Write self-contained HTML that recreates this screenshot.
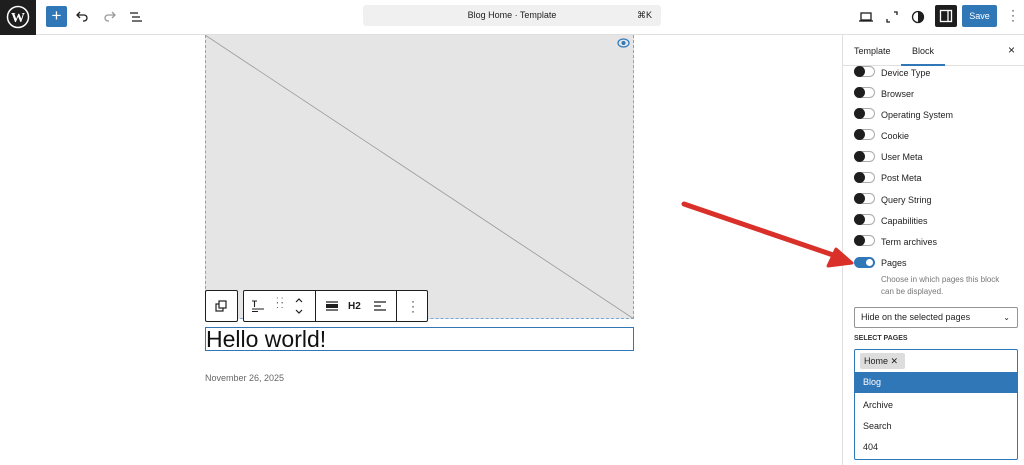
<!DOCTYPE html>
<html><head><style>
*{margin:0;padding:0;box-sizing:border-box}
body{width:1024px;height:465px;overflow:hidden;background:#fff;font-family:"Liberation Sans",sans-serif;color:#1e1e1e;position:relative;font-size:9px}
.abs{position:absolute}
.tog{position:absolute;left:854px;width:21px;height:11px;border:1px solid #aaa;border-radius:6px;background:#fff}
.tog::after{content:"";position:absolute;left:-1px;top:-1px;width:11px;height:11px;border-radius:50%;background:#1e1e1e}
.tl{position:absolute;left:881px;font-size:9px;margin-top:1px}
</style></head><body>
<div class="abs" style="left:0;top:0;width:1024px;height:35px;border-bottom:1px solid #e0e0e0;background:#fff"></div>
<div class="abs" style="left:0;top:0;width:36px;height:35px;background:#1e1e1e"></div>
<svg class="abs" style="left:6px;top:5px" width="24" height="24" viewBox="0 0 24 24"><circle cx="12" cy="12" r="10.5" fill="none" stroke="#fff" stroke-width="1.5"/><text x="12" y="17" text-anchor="middle" fill="#fff" font-size="14" font-family="Liberation Serif" font-weight="bold">W</text></svg>
<div class="abs" style="left:46px;top:6px;width:21px;height:21px;background:#3077b8;border-radius:2px;color:#fff;font-size:17px;text-align:center;line-height:20px">+</div>
<svg class="abs" style="left:75px;top:9px" width="16" height="16" viewBox="0 0 16 16"><path d="M5 3L2 6l3 3M2 6h7a3 3 0 010 6H8" fill="none" stroke="#1e1e1e" stroke-width="1.3"/></svg>
<svg class="abs" style="left:101px;top:9px" width="16" height="16" viewBox="0 0 16 16"><path d="M11 3l3 3-3 3M14 6H7a3 3 0 000 6h1" fill="none" stroke="#999" stroke-width="1.3"/></svg>
<svg class="abs" style="left:128px;top:9px" width="16" height="16" viewBox="0 0 16 16"><path d="M2 4h8M4 8h8M4 12h10" stroke="#1e1e1e" stroke-width="1.3"/></svg>
<div class="abs" style="left:363px;top:5px;width:298px;height:21px;background:#f0f0f0;border-radius:3px;font-size:9px;line-height:21px;text-align:center">Blog Home · Template<span style="position:absolute;right:9px">⌘K</span></div>
<svg class="abs" style="left:858px;top:9px" width="16" height="16" viewBox="0 0 16 16"><rect x="3" y="4" width="10" height="7" fill="none" stroke="#1e1e1e" stroke-width="1.3"/><path d="M1 12h14" stroke="#1e1e1e" stroke-width="1.3"/></svg>
<svg class="abs" style="left:884px;top:9px" width="16" height="16" viewBox="0 0 16 16"><path d="M10 3h3v3M6 13H3v-3" fill="none" stroke="#1e1e1e" stroke-width="1.3"/></svg>
<svg class="abs" style="left:910px;top:9px" width="16" height="16" viewBox="0 0 16 16"><circle cx="8" cy="8" r="5.5" fill="none" stroke="#1e1e1e" stroke-width="1.3"/><path d="M8 2.5a5.5 5.5 0 010 11z" fill="#1e1e1e"/></svg>
<div class="abs" style="left:935px;top:5px;width:22px;height:22px;background:#1e1e1e;border-radius:2px"></div>
<svg class="abs" style="left:938px;top:8px" width="16" height="16" viewBox="0 0 16 16"><rect x="2.5" y="2.5" width="11" height="11" fill="none" stroke="#fff" stroke-width="1.3"/><path d="M10 2.5v11" stroke="#fff" stroke-width="1.3"/></svg>
<div class="abs" style="left:962px;top:5px;width:35px;height:22px;background:#3077b8;border-radius:2px;color:#fff;font-size:9px;line-height:22px;text-align:center">Save</div>
<div class="abs" style="left:1011px;top:8px;font-size:12px;line-height:5px">·<br>·<br>·</div>
<div class="abs" style="left:205px;top:35px;width:429px;height:284px;background:#e5e5e5;border:1px dashed #7aa7d6;border-top:none"></div>
<svg class="abs" style="left:205px;top:35px" width="429" height="284"><line x1="0" y1="0" x2="429" y2="284" stroke="#999" stroke-width="0.8"/></svg>
<svg class="abs" style="left:617px;top:37px" width="13" height="12" viewBox="0 0 13 12"><ellipse cx="6.5" cy="6" rx="5.5" ry="4" fill="none" stroke="#3077b8" stroke-width="1.2"/><circle cx="6.5" cy="6" r="2" fill="#3077b8"/></svg>
<div class="abs" style="left:205px;top:290px;width:33px;height:32px;border:1px solid #1e1e1e;background:#fff;border-radius:2px"></div>
<svg class="abs" style="left:214px;top:299px" width="14" height="14" viewBox="0 0 14 14"><rect x="2" y="5" width="7" height="7" fill="none" stroke="#1e1e1e" stroke-width="1.2"/><rect x="5" y="2" width="7" height="7" fill="#fff" stroke="#1e1e1e" stroke-width="1.2"/></svg>
<div class="abs" style="left:243px;top:290px;width:185px;height:32px;border:1px solid #1e1e1e;background:#fff;border-radius:2px"></div>
<div class="abs" style="left:315px;top:290px;width:1px;height:32px;background:#1e1e1e"></div>
<div class="abs" style="left:396px;top:290px;width:1px;height:32px;background:#1e1e1e"></div>
<svg class="abs" style="left:250px;top:298px" width="16" height="16" viewBox="0 0 16 16"><path d="M2 3h5M4.5 3v6M2 11h12M2 13.5h6" stroke="#1e1e1e" stroke-width="1.1"/></svg>
<div class="abs" style="left:276px;top:298px;font-size:10px;letter-spacing:2px;line-height:5px;color:#555">::<br>::</div>
<svg class="abs" style="left:292px;top:296px" width="14" height="20" viewBox="0 0 14 20"><path d="M4 6l3-3 3 3M4 14l3 3 3-3" fill="none" stroke="#1e1e1e" stroke-width="1.2"/></svg>
<svg class="abs" style="left:324px;top:298px" width="16" height="16" viewBox="0 0 16 16"><path d="M2 4h12M2 12h12" stroke="#1e1e1e" stroke-width="1.2"/><rect x="2" y="6" width="12" height="4" fill="#1e1e1e"/></svg>
<div class="abs" style="left:348px;top:301px;font-size:10px;font-weight:bold">H2</div>
<svg class="abs" style="left:372px;top:298px" width="16" height="16" viewBox="0 0 16 16"><path d="M2 4h12M2 8h7M2 12h12" stroke="#1e1e1e" stroke-width="1.2"/></svg>
<div class="abs" style="left:411px;top:299px;font-size:12px;line-height:5px">·<br>·<br>·</div>
<div class="abs" style="left:205px;top:327px;width:429px;height:24px;border:1px solid #3077b8"></div>
<div class="abs" style="left:206px;top:326px;font-size:23px;line-height:26px;color:#111">Hello world!</div>
<div class="abs" style="left:205px;top:373px;font-size:9px;color:#666">November 26, 2025</div>
<div class="abs" style="left:842px;top:35px;width:182px;height:430px;border-left:1px solid #e0e0e0;background:#fff"></div>
<div class="abs" style="left:843px;top:35px;width:181px;height:31px;border-bottom:1px solid #e0e0e0"></div>
<div class="abs" style="left:854px;top:46px;font-size:9px">Template</div>
<div class="abs" style="left:912px;top:46px;font-size:9px">Block</div>
<div class="abs" style="left:901px;top:64px;width:44px;height:2px;background:#3077b8"></div>
<div class="abs" style="left:1008px;top:43px;font-size:12px">×</div>
<div class="tog" style="top:66px"></div><div class="tl" style="top:67px">Device Type</div>
<div class="tog" style="top:87px"></div><div class="tl" style="top:88px">Browser</div>
<div class="tog" style="top:108px"></div><div class="tl" style="top:109px">Operating System</div>
<div class="tog" style="top:129px"></div><div class="tl" style="top:130px">Cookie</div>
<div class="tog" style="top:151px"></div><div class="tl" style="top:151px">User Meta</div>
<div class="tog" style="top:172px"></div><div class="tl" style="top:172px">Post Meta</div>
<div class="tog" style="top:193px"></div><div class="tl" style="top:194px">Query String</div>
<div class="tog" style="top:214px"></div><div class="tl" style="top:215px">Capabilities</div>
<div class="tog" style="top:235px"></div><div class="tl" style="top:236px">Term archives</div>
<div class="abs" style="left:854px;top:257px;width:21px;height:11px;border-radius:6px;background:#3077b8"><div style="position:absolute;right:2px;top:2px;width:7px;height:7px;border-radius:50%;background:#fff"></div></div>
<div class="tl" style="top:257px">Pages</div>
<div class="abs" style="left:881px;top:274px;font-size:8px;color:#777;line-height:12px">Choose in which pages this block<br>can be displayed.</div>
<div class="abs" style="left:854px;top:307px;width:164px;height:21px;border:1px solid #949494;border-radius:2px;font-size:9px;line-height:19px;padding-left:6px">Hide on the selected pages<span style="position:absolute;right:7px;font-size:8px">⌄</span></div>
<div class="abs" style="left:854px;top:335px;font-size:7px;font-weight:bold;color:#333">SELECT PAGES</div>
<div class="abs" style="left:854px;top:349px;width:164px;height:111px;border:1px solid #3077b8;border-radius:2px;background:#fff"></div>
<div class="abs" style="left:860px;top:353px;width:45px;height:16px;background:#ddd;border-radius:2px;font-size:9px;line-height:16px;padding-left:4px">Home ✕</div>
<div class="abs" style="left:855px;top:372px;width:162px;height:21px;background:#3077b8;color:#fff;font-size:9px;line-height:21px;padding-left:8px">Blog</div>
<div class="abs" style="left:863px;top:400px;font-size:9px">Archive</div>
<div class="abs" style="left:863px;top:421px;font-size:9px">Search</div>
<div class="abs" style="left:863px;top:442px;font-size:9px">404</div>
<svg class="abs" style="left:0;top:0" width="1024" height="465"><line x1="684" y1="204" x2="836" y2="256" stroke="#d9302a" stroke-width="5" stroke-linecap="round"/><path d="M852 263L828 266L836 249Z" fill="#d9302a" stroke="#d9302a" stroke-width="3" stroke-linejoin="round"/></svg>
</body></html>
